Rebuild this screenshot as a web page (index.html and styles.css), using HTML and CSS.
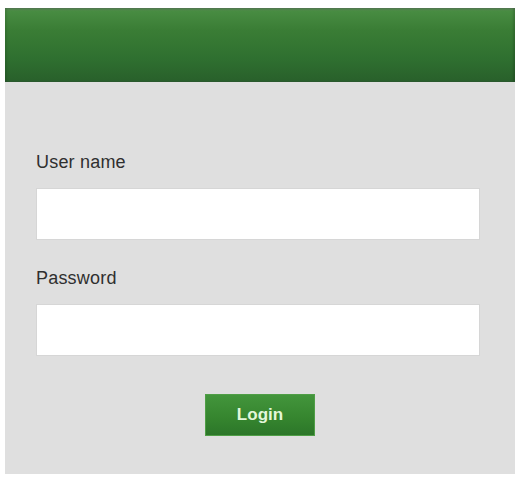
FILE: index.html
```html
<!DOCTYPE html>
<html>
<head>
<meta charset="utf-8">
<link rel="stylesheet" href="styles.css">
</head>
<body>
<div class="panel">
  <div class="panel-header"></div>
  <form class="panel-body">
    <label class="field-label" for="user">User name</label>
    <input class="field-input" id="user" type="text">
    <label class="field-label field-label--second" for="pass">Password</label>
    <input class="field-input" id="pass" type="password">
    <div class="actions">
      <button class="login-btn" type="button">Login</button>
    </div>
  </form>
</div>
</body>
</html>
```

FILE: styles.css
```css
html, body {
  margin: 0;
  padding: 0;
  background: #ffffff;
  font-family: "Liberation Sans", Arial, sans-serif;
}

.panel {
  margin: 8px 3px 0 5px;
  width: 510px;
}

.panel-header {
  height: 74px;
  background: linear-gradient(to bottom, #5b7f58 0px, #488c42 3px, #3a7d35 22px, #2f7030 50px, #29612b 72px, #2f5f33 74px);
  box-shadow: inset -2px 0 2px rgba(0,0,0,0.15), inset 2px 0 2px rgba(0,0,0,0.1);
}

.panel-body {
  margin: 0;
  background: #dfdfdf;
  padding: 70px 35px 38px 31px;
  display: flex;
  flex-direction: column;
}

.field-label {
  font-size: 18px;
  line-height: 21px;
  color: #2f2f2f;
  letter-spacing: 0.2px;
}

.field-label--second {
  margin-top: 28px;
}

.field-input {
  margin: 15px 0 0 0;
  height: 52px;
  box-sizing: border-box;
  border: 1px solid #d6d6d6;
  background: #ffffff;
  outline: none;
  font: inherit;
}

.actions {
  display: flex;
  justify-content: center;
  margin-top: 38px;
  padding-left: 4px;
}

.login-btn {
  width: 110px;
  height: 42px;
  border: 1px solid #4f9e46;
  background: linear-gradient(to bottom, #43953c 0%, #36862f 55%, #2c7629 100%);
  color: #e3f7da;
  font-family: "Liberation Sans", Arial, sans-serif;
  font-weight: bold;
  font-size: 17px;
  padding: 0;
  cursor: pointer;
}
```
